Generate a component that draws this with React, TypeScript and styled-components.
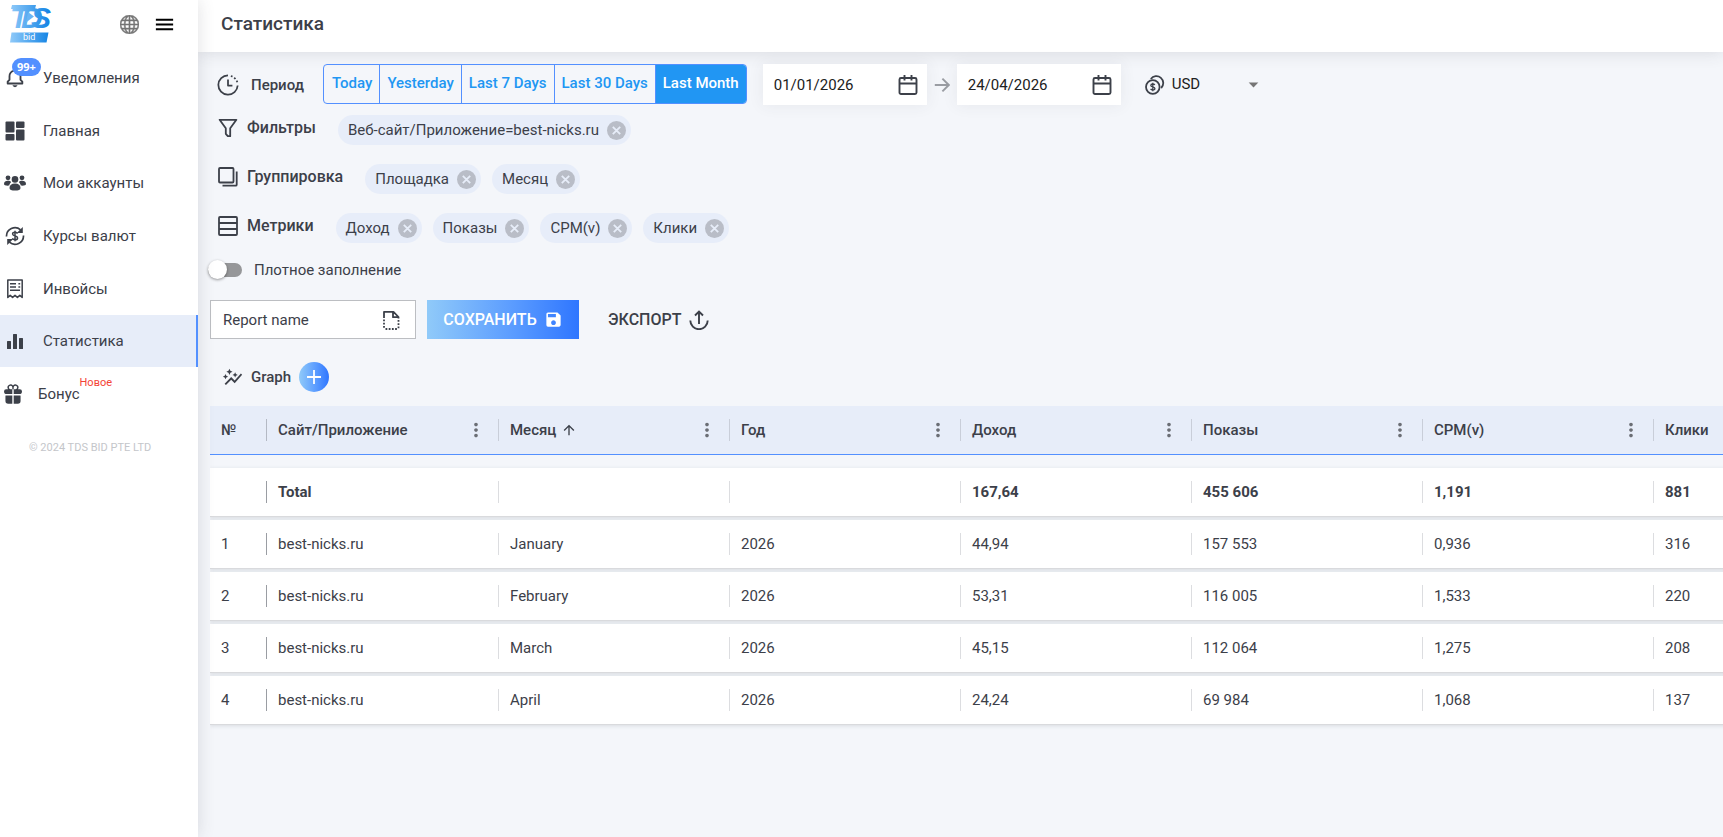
import React from 'react';
import styled, { createGlobalStyle, css } from 'styled-components';
import { BsGlobe } from 'react-icons/bs';
import { BiBell } from 'react-icons/bi';
import { IoGift } from 'react-icons/io5';
import { MdArrowDropDown, MdArrowUpward, MdAutoGraph, MdMenu, MdMoreVert, MdSave } from 'react-icons/md';

const ink = '#3c4049';
const accent = '#5390ff';
const blue = '#2196f3';
const tint = '#e7edf9';

const GlobalStyle = createGlobalStyle`
  *, *::before, *::after { box-sizing: border-box; }
  body { margin: 0; background: #f4f6fa; color: ${ink}; font: 400 15px/20px Roboto, sans-serif; }
  button, input, select { font: inherit; color: inherit; }
  button { border: 0; padding: 0; background: none; cursor: pointer; }
  svg { display: block; flex: none; }
`;

/* ---------- icons ---------- */

type IconProps = { size?: number };

const LineIcon: React.FC<IconProps & { children: React.ReactNode; width?: number }> = ({ size = 20, width = 2, children }) => (
  <svg width={size} height={size} viewBox="0 0 20 20" fill="none" stroke="currentColor" strokeWidth={width} strokeLinejoin="round" aria-hidden="true">
    {children}
  </svg>
);

const DashboardIcon = () => (
  <svg width="20" height="20" viewBox="0 0 20 20" fill="currentColor" aria-hidden="true">
    <rect x="0.5" y="0.5" width="9" height="11" rx="1" />
    <rect x="11" y="0.5" width="8.5" height="6.5" rx="1" />
    <rect x="0.5" y="13" width="9" height="6.5" rx="1" />
    <rect x="11" y="8.5" width="8.5" height="11" rx="1" />
  </svg>
);

const PeopleIcon = () => (
  <svg width="22" height="18" viewBox="0 0 22 18" fill="currentColor" aria-hidden="true">
    <circle cx="4" cy="3.8" r="2.4" />
    <circle cx="18" cy="3.8" r="2.4" />
    <circle cx="11" cy="5.4" r="3.3" />
    <path d="M0 10c0-2 1.6-3.2 4-3.2 1.4 0 2.5.4 3.2 1.1C6.4 8.8 5.5 9.6 5.2 11.6 2 11.8 0 11.4 0 10z" />
    <path d="M22 10c0-2-1.6-3.2-4-3.2-1.4 0-2.5.4-3.2 1.1.8.9 1.7 1.7 2 3.7 3.2.2 5.2-.2 5.2-1.6z" />
    <path d="M5.5 14c0-3 2-4.600 5.5-4.600s5.500 1.600 5.500 4.600c0 1.800-2 2.600-5.500 2.600S5.500 15.800 5.500 14z" />
  </svg>
);

const RatesIcon = () => (
  <LineIcon width={1.7}>
    <path d="M1.5 10.5A8.500 8.500 0 0 1 15.600 3.800M18.500 9.500A8.500 8.500 0 0 1 4.400 16.200" />
    <path d="M17.800 1v6h-6z M2.200 19v-6h6z" fill="currentColor" stroke="none" />
    <path d="M12.500 7.600c-.4-1-1.300-1.400-2.500-1.400-1.500 0-2.400.7-2.400 1.800 0 2.600 5 1.400 5 4 0 1.100-1 1.800-2.600 1.800-1.300 0-2.200-.5-2.600-1.500M10 4.800v10.400" strokeWidth="1.5" />
  </LineIcon>
);

const InvoiceIcon = () => (
  <LineIcon width={1.5}>
    <path d="M2.800 1h14.400v17.400l-2.400-2-2.400 2-2.400-2-2.400 2-2.400-2-2.400 2z" />
    <path d="M5 4.800h6M5 8h6M5 11.200h10M13.400 4.800h1.800M13.400 8h1.800" />
  </LineIcon>
);

const BarsIcon = () => (
  <svg width="20" height="20" viewBox="0 0 20 20" fill="currentColor" aria-hidden="true">
    <rect x="2" y="10" width="4" height="8" rx="0.5" />
    <rect x="8" y="3" width="4" height="15" rx="0.5" />
    <rect x="14" y="7" width="4" height="11" rx="0.5" />
  </svg>
);

const PeriodIcon = () => (
  <LineIcon size={22} width={1.6}>
    <path d="M10 1.200A8.800 8.800 0 1 0 18.800 10.500" />
    <path d="M10 5v5.500h4" />
    <path d="M12.600 1.800A8.800 8.800 0 0 1 18.600 8" strokeDasharray="1.6 1.8" />
  </LineIcon>
);

const FunnelIcon = () => (
  <LineIcon width={1.8}>
    <path d="M1.600 1.800h16.800l-6.200 8.400v8h-2.400l-2-2.400v-5.600z" />
  </LineIcon>
);

const GroupIcon = () => (
  <LineIcon width={1.8}>
    <rect x="1" y="1" width="14.5" height="14.5" rx="1" />
    <path d="M18.700 4.500V17.700a1 1 0 0 1-1 1H4.500" />
  </LineIcon>
);

const MetricsIcon = () => (
  <LineIcon width={1.8}>
    <rect x="1" y="1" width="18" height="18" rx="1" />
    <path d="M1 7h18M1 13h18" />
  </LineIcon>
);

const CalendarIcon = () => (
  <LineIcon width={1.9}>
    <rect x="1.5" y="3" width="17" height="16" rx="1.5" />
    <path d="M1.500 8.500h17M6.500 0v5.500M13.500 0v5.500" />
  </LineIcon>
);

const ArrowIcon = () => (
  <LineIcon size={16} width={2.4}>
    <path d="M1 10h17M10.500 2l8 8-8 8" strokeLinejoin="miter" />
  </LineIcon>
);

const CoinsIcon = () => (
  <LineIcon width={1.8}>
    <circle cx="7.8" cy="12" r="6.8" />
    <path d="M5.800 4A6.900 6.900 0 1 1 16.200 13" />
    <path d="M9.800 10c-.4-.7-1.100-1-2-1-1.200 0-2 .5-2 1.400 0 1.900 4.100 1.100 4.100 3.100 0 .9-.9 1.500-2.100 1.500-1 0-1.800-.4-2.200-1.100M7.800 7.800v8.400" strokeWidth="1.3" />
  </LineIcon>
);

const DashedFileIcon = () => (
  <LineIcon width={1.8}>
    <path d="M3 8V1.800h9.500L17.500 7v1.500M12 1.800V7.200h5.500" />
    <path d="M3 9.500V19M17.500 10V19M4.500 19h12" strokeDasharray="1.8 1.4" />
  </LineIcon>
);

const ExportIcon = () => (
  <LineIcon width={1.9}>
    <path d="M1.300 10.500a8.700 8.700 0 0 0 17.400 0M10 14V2M6 5.500l4-4 4 4" strokeLinejoin="miter" />
  </LineIcon>
);

const PlusIcon = () => (
  <LineIcon size={20} width={1.8}>
    <path d="M10 3v14M3 10h14" />
  </LineIcon>
);

const ClearIcon = () => (
  <svg width="19" height="19" viewBox="0 0 19 19" aria-hidden="true">
    <circle cx="9.5" cy="9.5" r="9.5" fill="#b9bdc7" />
    <path d="M5.800 5.800l7.400 7.400M13.200 5.800l-7.400 7.400" stroke={tint} strokeWidth="1.8" />
  </svg>
);

const LogoSvg = styled.svg`
  overflow: visible;
`;

const Logo = () => (
  <LogoSvg width="42" height="40" viewBox="0 0 42 40" role="img" aria-label="TDS bid">
    <defs>
      <linearGradient id="logo" x1="0" x2="42" y1="0" y2="0" gradientUnits="userSpaceOnUse">
        <stop offset="0" stopColor="#90caf9" />
        <stop offset="1" stopColor="#0b7fe3" />
      </linearGradient>
    </defs>
    <path d="M2 1h24l-1 4H1z" fill="url(#logo)" />
    <text x="0 11 21" y="24" fontFamily="Liberation Sans, sans-serif" fontSize="30" fontWeight="700" fontStyle="italic" fill="url(#logo)">TDS</text>
    <path d="M18 8l6 4.500-8 6z" fill="#6ab5f5" />
    <path d="M1.500 28.500h37l-2 10H0z" fill="url(#logo)" />
    <text x="13" y="36" fontFamily="Roboto, sans-serif" fontSize="9" fill="#fff">bid</text>
  </LogoSvg>
);

/* ---------- shell ---------- */

const Page = styled.div`
  display: flex;
  min-height: 100vh;
`;

const Sidebar = styled.aside`
  position: relative;
  z-index: 2;
  flex: 0 0 198px;
  background: #fff;
  box-shadow: 0 0 16px rgba(60, 64, 73, 0.16);
`;

const Brand = styled.div`
  display: flex;
  align-items: center;
  height: 52px;
  padding: 0 22px 4px 10px;
`;

const IconButton = styled.button<{ $color?: string }>`
  display: grid;
  place-items: center;
  color: ${(p) => p.$color ?? ink};
`;

const GlobeButton = styled(IconButton)`
  margin: 0 14px 0 auto;
`;

const Menu = styled.nav`
  display: grid;
  grid-auto-rows: 1fr;
  height: 368px;
`;

const MenuLink = styled.a<{ $active?: boolean; $compact?: boolean }>`
  display: flex;
  align-items: center;
  gap: ${(p) => (p.$compact ? 14 : 17)}px;
  padding-left: ${(p) => (p.$compact ? 2 : 4)}px;
  color: ${ink};
  text-decoration: none;
  ${(p) =>
    p.$active &&
    css`
      background: ${tint};
      border-right: 2px solid ${accent};
    `}
`;

const MenuIcon = styled.span`
  position: relative;
  display: grid;
  place-items: center;
  width: 22px;
  height: 22px;
`;

const CountBadge = styled.span`
  position: absolute;
  left: 8px;
  bottom: 13px;
  padding: 0 5px;
  border-radius: 9px;
  background: ${accent};
  color: #fff;
  font: 700 11px/18px 'Noto Sans', sans-serif;
`;

const MenuText = styled.span`
  position: relative;
`;

const NewBadge = styled.span`
  position: absolute;
  left: 100%;
  bottom: 13px;
  color: #f44336;
  font-size: 11px;
  line-height: 16px;
`;

const Copyright = styled.p`
  margin: 20px 0 0 29px;
  color: #c4c6ca;
  font-size: 11px;
  line-height: 16px;
`;

const Main = styled.div`
  flex: 1;
  min-width: 0;
`;

const TopBar = styled.header`
  display: flex;
  align-items: center;
  height: 52px;
  padding: 0 23px 4px;
  background: #fff;
  box-shadow: 0 0 16px rgba(60, 64, 73, 0.16);
`;

const Title = styled.h1`
  margin: 0;
  font-size: 19px;
  line-height: 24px;
  font-weight: 500;
`;

const Content = styled.main`
  display: flex;
  flex-direction: column;
  padding: 12px 0 0 12px;
`;

/* ---------- filters ---------- */

const PeriodRow = styled.div`
  display: flex;
  align-items: center;
  padding-left: 7px;
  margin-bottom: 10px;
`;

const PeriodLabel = styled.span`
  margin: 0 19px 0 12px;
  font-size: 15px;
  font-weight: 500;
`;

const Presets = styled.div`
  display: flex;
  align-self: flex-start;
  height: 40px;
  overflow: hidden;
  border: 1px solid ${accent};
  border-radius: 4px;
`;

const Preset = styled.button<{ $active?: boolean }>`
  padding: 0 7px 2px 8px;
  background: ${(p) => (p.$active ? blue : 'transparent')};
  color: ${(p) => (p.$active ? '#fff' : blue)};
  font-weight: 500;
  & + & {
    padding-left: 7px;
    border-left: 1px solid ${accent};
  }
`;

const DateField = styled.label`
  display: flex;
  align-items: center;
  width: 164px;
  height: 41px;
  padding: 0 9px 0 11px;
  background: #fff;
  box-shadow: 0 0 16px rgba(60, 64, 73, 0.08);
`;

const FieldInput = styled.input`
  flex: 1;
  min-width: 0;
  padding: 0;
  border: 0;
  outline: 0;
  background: none;
  &::placeholder {
    color: ${ink};
    opacity: 1;
  }
`;

const DateInput = styled(FieldInput)`
  color: #212121;
`;

const RangeArrow = styled.span`
  margin: 0 7px;
  color: #9a9da3;
`;

const DateRange = styled.div`
  display: flex;
  align-items: center;
  margin: 0 24px 0 16px;
`;

const CurrencyField = styled.label`
  display: flex;
  align-items: center;
  width: 120px;
  gap: 7px;
`;

const CurrencySelect = styled.select`
  flex: 1;
  min-width: 0;
  padding: 0 0 2px;
  border: 0;
  outline: 0;
  background: none;
  appearance: none;
  color: #212121;
`;

const Caret = styled.span`
  color: #757575;
`;

const FilterRow = styled.div`
  display: flex;
  gap: 22px;
  padding-left: 8px;
  margin-bottom: 19px;
`;

const FilterLabel = styled.span`
  display: flex;
  align-items: center;
  gap: 9px;
  height: 26px;
  font-size: 16px;
  font-weight: 500;
`;

const ChipList = styled.div`
  display: flex;
  flex-wrap: wrap;
  gap: 11px;
`;

const Chip = styled.span`
  display: flex;
  align-items: center;
  gap: 8px;
  height: 30px;
  padding: 0 5px 0 10px;
  border-radius: 15px;
  background: ${tint};
`;

const SwitchRow = styled.label`
  display: flex;
  align-items: center;
  align-self: flex-start;
  gap: 12px;
  height: 20px;
  margin: -2px 0 20px -2px;
`;

const Switch = styled.input`
  appearance: none;
  position: relative;
  width: 34px;
  height: 14px;
  margin: 0;
  border-radius: 7px;
  background: #969799;
  &::before {
    content: '';
    position: absolute;
    top: -3px;
    left: 0;
    width: 19px;
    height: 19px;
    border-radius: 50%;
    background: #fff;
    box-shadow: 0 1px 3px rgba(0, 0, 0, 0.4);
  }
  &:checked::before {
    left: 15px;
  }
`;

const ReportRow = styled.div`
  display: flex;
  align-items: center;
  height: 39px;
  margin-bottom: 23px;
`;

const ReportField = styled.label`
  display: flex;
  align-items: center;
  align-self: stretch;
  width: 206px;
  padding: 0 14px 0 12px;
  border: 1px solid #bcbec2;
  background: #fff;
`;

const SaveButton = styled.button`
  display: flex;
  align-items: center;
  justify-content: center;
  align-self: stretch;
  gap: 7px;
  width: 152px;
  margin: 0 29px 0 11px;
  background: linear-gradient(90deg, #90caf9, #5c9dff 55%, #2f76ff);
  color: #fff;
  font-size: 16px;
  font-weight: 500;
`;

const ExportButton = styled.button`
  display: flex;
  align-items: center;
  gap: 8px;
  font-size: 16px;
  font-weight: 500;
`;

const GraphRow = styled.div`
  display: flex;
  align-items: center;
  gap: 8px;
  padding-left: 12px;
  margin-bottom: 14px;
  font-size: 15px;
  font-weight: 500;
`;

const AddButton = styled.button`
  display: grid;
  place-items: center;
  width: 30px;
  height: 30px;
  border-radius: 50%;
  background: linear-gradient(90deg, #90caf9, #5c9dff 55%, #2f76ff);
  color: #fff;
`;

/* ---------- table ---------- */

const TableScroll = styled.div`
  overflow-x: auto;
  scrollbar-width: none;
  padding-bottom: 16px;
`;

const Table = styled.table`
  display: block;
  width: max-content;
  min-width: 100%;
`;

const TableHead = styled.thead`
  display: block;
  margin-bottom: 13px;
`;

const TableBody = styled.tbody`
  display: flex;
  flex-direction: column;
  gap: 3px;
`;

const HeadRow = styled.tr`
  display: flex;
  height: 49px;
  background: ${tint};
  border-bottom: 1px solid ${accent};
`;

const BodyRow = styled.tr<{ $total?: boolean }>`
  display: flex;
  height: 49px;
  background: #fff;
  border-bottom: 1px solid #d9dadd;
  box-shadow: 0 1px 4px rgba(60, 64, 73, 0.14);
  font-weight: ${(p) => (p.$total ? 700 : 400)};
`;

const cell = css<{ $index?: boolean }>`
  display: flex;
  align-items: center;
  flex: 0 0 ${(p) => (p.$index ? 57 : 231)}px;
  padding: 0 0 0 11px;
  text-align: left;
  &:nth-child(2) {
    flex-basis: 232px;
  }
  &::after {
    content: '';
    width: 1px;
    height: 22px;
    margin-left: auto;
    background: ${(p) => (p.$index ? '#9a9da3' : '#dcdde0')};
  }
`;

const Cell = styled.td`
  ${cell}
`;

const HeadCell = styled.th`
  ${cell}
  font-weight: 500;
  &::after {
    margin-left: 0;
    background: ${(p) => (p.$index ? '#b4b9c4' : '#c9ced9')};
  }
`;

const HeadText = styled.span`
  display: flex;
  align-items: center;
  gap: 5px;
  margin-right: auto;
`;

const ColumnMenu = styled(IconButton)`
  margin-right: 11px;
`;

/* ---------- data ---------- */

const menu = [
  { label: 'Уведомления', icon: <BiBell size={22} />, count: '99+' },
  { label: 'Главная', icon: <DashboardIcon /> },
  { label: 'Мои аккаунты', icon: <PeopleIcon /> },
  { label: 'Курсы валют', icon: <RatesIcon /> },
  { label: 'Инвойсы', icon: <InvoiceIcon /> },
  { label: 'Статистика', icon: <BarsIcon />, active: true },
  { label: 'Бонус', icon: <IoGift size={22} />, note: 'Новое' },
];

const presets = ['Today', 'Yesterday', 'Last 7 Days', 'Last 30 Days', 'Last Month'];

const filters = [
  { label: 'Фильтры', icon: <FunnelIcon />, chips: ['Веб-сайт/Приложение=best-nicks.ru'] },
  { label: 'Группировка', icon: <GroupIcon />, chips: ['Площадка', 'Месяц'] },
  { label: 'Метрики', icon: <MetricsIcon />, chips: ['Доход', 'Показы', 'CPM(v)', 'Клики'] },
];

const columns = ['№', 'Сайт/Приложение', 'Месяц', 'Год', 'Доход', 'Показы', 'CPM(v)', 'Клики'];

const rows = [
  ['', 'Total', '', '', '167,64', '455 606', '1,191', '881'],
  ['1', 'best-nicks.ru', 'January', '2026', '44,94', '157 553', '0,936', '316'],
  ['2', 'best-nicks.ru', 'February', '2026', '53,31', '116 005', '1,533', '220'],
  ['3', 'best-nicks.ru', 'March', '2026', '45,15', '112 064', '1,275', '208'],
  ['4', 'best-nicks.ru', 'April', '2026', '24,24', '69 984', '1,068', '137'],
];

export default function App() {
  return (
    <Page>
      <GlobalStyle />
      <Sidebar>
        <Brand>
          <Logo />
          <GlobeButton $color="#757575" aria-label="Язык">
            <BsGlobe size={19} stroke="currentColor" strokeWidth="0.4" />
          </GlobeButton>
          <IconButton $color="#000" aria-label="Меню">
            <MdMenu size={23} />
          </IconButton>
        </Brand>
        <Menu>
          {menu.map((item) => (
            <MenuLink key={item.label} href="#" $active={item.active} $compact={!!item.note}>
              <MenuIcon>
                {item.icon}
                {item.count && <CountBadge>{item.count}</CountBadge>}
              </MenuIcon>
              <MenuText>
                {item.label}
                {item.note && <NewBadge>{item.note}</NewBadge>}
              </MenuText>
            </MenuLink>
          ))}
        </Menu>
        <Copyright>© 2024 TDS BID PTE LTD</Copyright>
      </Sidebar>
      <Main>
        <TopBar>
          <Title>Статистика</Title>
        </TopBar>
        <Content>
          <PeriodRow>
            <PeriodIcon />
            <PeriodLabel>Период</PeriodLabel>
            <Presets>
              {presets.map((name) => (
                <Preset key={name} $active={name === 'Last Month'}>
                  {name}
                </Preset>
              ))}
            </Presets>
            <DateRange>
              <DateField>
                <DateInput aria-label="Начало периода" defaultValue="01/01/2026" />
                <CalendarIcon />
              </DateField>
              <RangeArrow>
                <ArrowIcon />
              </RangeArrow>
              <DateField>
                <DateInput aria-label="Конец периода" defaultValue="24/04/2026" />
                <CalendarIcon />
              </DateField>
            </DateRange>
            <CurrencyField>
              <CoinsIcon />
              <CurrencySelect aria-label="Валюта" defaultValue="USD">
                <option>USD</option>
              </CurrencySelect>
              <Caret>
                <MdArrowDropDown size={23} />
              </Caret>
            </CurrencyField>
          </PeriodRow>
          {filters.map((filter) => (
            <FilterRow key={filter.label}>
              <FilterLabel>
                {filter.icon}
                {filter.label}
              </FilterLabel>
              <ChipList>
                {filter.chips.map((chip) => (
                  <Chip key={chip}>
                    {chip}
                    <IconButton aria-label={`Убрать ${chip}`}>
                      <ClearIcon />
                    </IconButton>
                  </Chip>
                ))}
              </ChipList>
            </FilterRow>
          ))}
          <SwitchRow>
            <Switch type="checkbox" />
            Плотное заполнение
          </SwitchRow>
          <ReportRow>
            <ReportField>
              <FieldInput aria-label="Report name" placeholder="Report name" />
              <DashedFileIcon />
            </ReportField>
            <SaveButton>
              СОХРАНИТЬ
              <MdSave size={19} />
            </SaveButton>
            <ExportButton>
              ЭКСПОРТ
              <ExportIcon />
            </ExportButton>
          </ReportRow>
          <GraphRow>
            <MdAutoGraph size={21} />
            Graph
            <AddButton aria-label="Добавить график">
              <PlusIcon />
            </AddButton>
          </GraphRow>
          <TableScroll>
            <Table>
              <TableHead>
                <HeadRow>
                  {columns.map((name, i) => (
                    <HeadCell key={name} $index={i === 0} scope="col">
                      <HeadText>
                        {name}
                        {name === 'Месяц' && <MdArrowUpward size={16} />}
                      </HeadText>
                      {i > 0 && (
                        <ColumnMenu $color="#6b6e75" aria-label={`Меню столбца ${name}`}>
                          <MdMoreVert size={22} />
                        </ColumnMenu>
                      )}
                    </HeadCell>
                  ))}
                </HeadRow>
              </TableHead>
              <TableBody>
                {rows.map((row, r) => (
                  <BodyRow key={r} $total={r === 0}>
                    {row.map((value, i) => (
                      <Cell key={columns[i]} $index={i === 0}>
                        {value}
                      </Cell>
                    ))}
                  </BodyRow>
                ))}
              </TableBody>
            </Table>
          </TableScroll>
        </Content>
      </Main>
    </Page>
  );
}
